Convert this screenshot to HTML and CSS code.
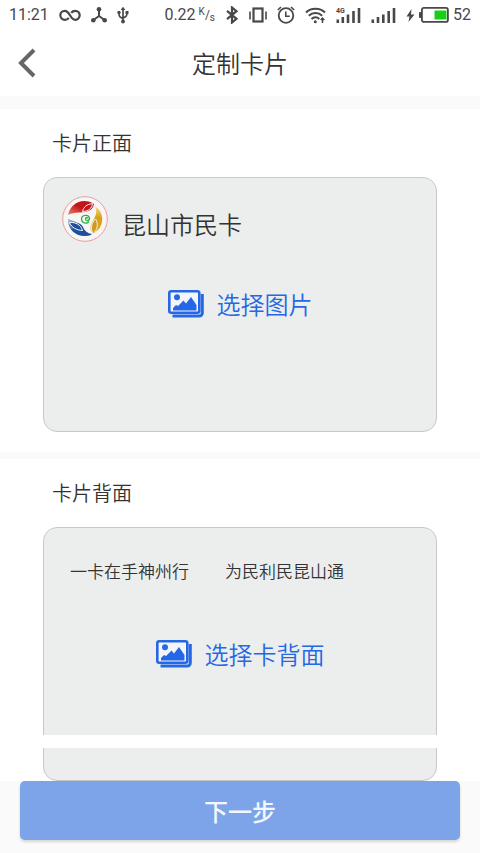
FILE: index.html
```html
<!DOCTYPE html>
<html lang="zh-CN">
<head>
    <meta charset="UTF-8">
    <meta name="viewport" content="width=device-width, initial-scale=1.0">
    <title>定制卡片</title>
    <link rel="stylesheet" href="styles.css">
</head>
<body>
    <!-- icono compartido: galería -->
    <svg class="defs" width="0" height="0" aria-hidden="true">
        <symbol id="icon-gallery" viewBox="0 0 36 28">
            <path d="M34.300 4v19a3 3 0 0 1-3 3H4.500" fill="none" stroke="#2468e6" stroke-width="3"/>
            <rect x="1.300" y="1.300" width="30" height="21.500" rx="2" fill="#f3f5fa" stroke="#2468e6" stroke-width="2.600"/>
            <circle cx="9" cy="7.300" r="3" fill="#2468e6"/>
            <path d="M5 20.500v-2.500l3-3 2 1 5.500-5.500 2.500 3 5-6.500 5.500 8v5.500z" fill="#2468e6"/>
        </symbol>
    </svg>

    <div class="status-bar">
        <div class="status-group">
            <span>11:21</span>
            <svg width="22" height="18" viewBox="0 0 22 18"><path d="M9.800 11.800C8.800 13.200 7.500 13.800 5.800 13.800a4.500 4.500 0 0 1 0-9C11 4.800 11 13.800 16.200 13.800a4.500 4.500 0 0 0 0-9c-1.700 0-3 .6-4 2" fill="none" stroke="#484848" stroke-width="2.200"/></svg>
            <svg width="16" height="18" viewBox="0 0 16 18"><path d="M8 3v7M8 10l-5.500 4M8 10l5.500 4" fill="none" stroke="#484848" stroke-width="2"/><g fill="#484848"><circle cx="8" cy="3.200" r="2.300"/><circle cx="2.300" cy="14.200" r="2.300"/><circle cx="13.700" cy="14.200" r="2.300"/></g></svg>
            <svg width="12" height="18" viewBox="0 0 12 18"><path d="M6 3v12M6 12.500C3.500 11.500 2 11 2 7.500M6 12c2.500-1 4-1.500 4-5" fill="none" stroke="#484848" stroke-width="1.700"/><path d="M3.600 4 6 .8 8.400 4z" fill="#484848"/><circle cx="6" cy="15.500" r="1.900" fill="#484848"/><circle cx="2" cy="6.500" r="1.700" fill="#484848"/><path d="M8.500 5h3v3h-3z" fill="#484848"/></svg>
        </div>
        <div class="status-group">
            <span class="speed">0.22 <span class="unit"><sup>K</sup>/<sub>s</sub></span></span>
            <svg width="14" height="18" viewBox="0 0 14 18"><path d="M2 4.800 11.500 12.800 7 16.500v-15l4.500 3.700L2 13.200" fill="none" stroke="#484848" stroke-width="2.200"/></svg>
            <svg width="18" height="18" viewBox="0 0 18 18"><path d="M1 5.500v8M17 5.500v8" stroke="#484848" stroke-width="1.600"/><rect x="4.500" y="2.500" width="9" height="13" fill="none" stroke="#484848" stroke-width="2.200"/></svg>
            <svg width="18" height="18" viewBox="0 0 18 18"><circle cx="9" cy="9.500" r="7.300" fill="none" stroke="#484848" stroke-width="1.800"/><path d="M8.800 5.500v4.700h4M.8 4 4 1M14 1l3.200 3" fill="none" stroke="#484848" stroke-width="1.600"/></svg>
            <svg width="21" height="18" viewBox="0 0 21 18"><path d="M1 6.500C6 1.500 15 1.500 20 6.500M3.800 9.800C7.500 6.200 13.500 6.200 17.200 9.800M6.500 13c2.400-2.400 5.500-2.400 7.800 0" fill="none" stroke="#484848" stroke-width="2"/><circle cx="10.300" cy="15.800" r="1.500" fill="#484848"/><path d="M17.500 17v-5M15.700 14l1.800-2 1.800 2" fill="none" stroke="#484848" stroke-width="1.500"/></svg>
            <svg width="25" height="18" viewBox="0 0 25 18"><text x="0" y="7" class="net-label">4G</text><path d="M1.800 17v-3.500M6.800 17v-6M12 17V8.500M17.500 17V5M23 17V2" stroke="#484848" stroke-width="2.600"/></svg>
            <svg width="25" height="18" viewBox="0 0 25 18"><path d="M1.800 17v-3.500M7 17v-6M12.300 17V8.500M17.700 17V5M23 17V2" stroke="#484848" stroke-width="2.600"/></svg>
            <div class="battery">
                <svg width="9" height="18" viewBox="0 0 9 18"><path d="M5.500 3 .5 10.500h3L2.500 16l6-7.500H5z" fill="#484848"/></svg>
                <svg width="30" height="18" viewBox="0 0 30 18"><rect x="2.900" y="1.900" width="26" height="14" rx="2" fill="none" stroke="#484848" stroke-width="1.800"/><rect x="0" y="6" width="3" height="6" rx="1" fill="#484848"/><rect x="15.500" y="4.500" width="12" height="9" fill="#17cf17"/></svg>
                <span>52</span>
            </div>
        </div>
    </div>

    <header class="header">
        <button class="back" type="button" aria-label="返回">
            <svg width="18" height="30" viewBox="0 0 18 30"><path d="M16 2 3 15l13 13" fill="none" stroke="#666" stroke-width="4"/></svg>
        </button>
        <h1>定制卡片</h1>
    </header>

    <main>
        <section class="section">
            <h2>卡片正面</h2>
            <div class="card card-front">
                <div class="card-brand">
                    <svg class="logo" width="46" height="46" viewBox="0 0 46 46" aria-hidden="true">
                        <defs>
                            <linearGradient id="red" x1="1" y1="0" x2="0" y2="1"><stop offset="0.5" stop-color="#c3161c"/><stop offset="1" stop-color="#ef8a70"/></linearGradient>
                            <linearGradient id="blue" x1="0" y1="0" x2="1" y2="1"><stop offset="0" stop-color="#b9d0ee"/><stop offset="0.45" stop-color="#1d4f9c"/></linearGradient>
                            <linearGradient id="gold" x1="0" y1="0" x2="0" y2="1"><stop offset="0" stop-color="#f3d980"/><stop offset="0.4" stop-color="#d8a21a"/></linearGradient>
                        </defs>
                        <circle cx="23" cy="23" r="22.300" fill="#f7f6f5" stroke="#ee9a9d" stroke-width="1"/>
                        <path d="M6 19C8 10 15 5 22 5c4 0 7.500 1 10 3-1 5-4 7-9 8-6 .8-11 0-17 3z" fill="url(#red)"/>
                        <path d="M20.500 15.500c1-4.500 4.500-7.500 10-7.800-.6 4.800-4 7.600-10 7.800z" fill="#c3161c" stroke="#f7f6f5" stroke-width="1"/>
                        <path d="M6 22.500c-1 10 7 18 18 17.500 2.500 0 5-.8 6-2-4.500-.5-7.500-3-9-7C19 26.500 12 26 6 22.500z" fill="url(#blue)"/>
                        <path d="M7.500 26.500c6.500-.5 11.500 2.500 13 8-6-.3-11-3-13-8z" fill="#1d4f9c" stroke="#f7f6f5" stroke-width="1"/>
                        <path d="M33 10.500c9.500 5 10.500 21-2 27-3-3-3-7-1-11 3-5.500 6-9 3-16z" fill="url(#gold)"/>
                        <path d="M33.500 23c3.200 4.500 2 11-2.300 14.500-3.200-4.500-1.700-11 2.300-14.500z" fill="#cf9a1c" stroke="#f7f6f5" stroke-width="1"/>
                        <path d="M27 25.500c-2.500 3-7.500 1.500-7.500-2.500 0-4.500 7.500-5 8-.7.200 2.700-4 3.200-4 .7 0-1.500 2-1.700 2.500-.5" fill="none" stroke="#35b04c" stroke-width="1.300"/>
                    </svg>
                    <span class="brand-name">昆山市民卡</span>
                </div>
                <button class="pick" type="button">
                    <svg width="36" height="28" aria-hidden="true"><use href="#icon-gallery"/></svg>
                    选择图片
                </button>
            </div>
        </section>

        <section class="section section-back">
            <h2>卡片背面</h2>
            <div class="card card-back">
                <div class="slogans">
                    <span>一卡在手神州行</span>
                    <span>为民利民昆山通</span>
                </div>
                <button class="pick" type="button">
                    <svg width="36" height="28" aria-hidden="true"><use href="#icon-gallery"/></svg>
                    选择卡背面
                </button>
                <div class="stripe"></div>
            </div>
        </section>
    </main>

    <footer class="footer">
        <button class="next" type="button">下一步</button>
    </footer>
</body>
</html>
```

FILE: styles.css
```css
* {
    box-sizing: border-box;
}
body {
    margin: 0;
    background: #fafafa;
    font-family: "Noto Sans CJK SC", sans-serif;
    font-weight: 350;
    color: #333;
}
button {
    padding: 0;
    border: 0;
    background: none;
    font-family: inherit;
    font-weight: inherit;
    cursor: pointer;
}
svg {
    display: block;
    flex: none;
}
.defs {
    position: absolute;
}

/* Barra de estado */
.status-bar {
    display: flex;
    justify-content: space-between;
    height: 30px;
    padding: 0 9px;
    background: #fff;
    font-family: Roboto, sans-serif;
    font-size: 16px;
    font-weight: 400;
    line-height: 30px;
    color: #484848;
    white-space: nowrap;
}
.status-group {
    display: flex;
    align-items: center;
    gap: 10px;
}
.speed {
    display: flex;
    gap: 3px;
}
.unit {
    font-size: 12px;
}
.unit sup, .unit sub {
    font-size: 10px;
    line-height: 0;
}
.unit sup {
    vertical-align: 4px;
}
.unit sub {
    vertical-align: -2px;
}
.net-label {
    font-size: 7px;
    font-weight: bold;
    fill: #484848;
}
.battery {
    display: flex;
    align-items: center;
    gap: 4px;
}

/* Cabecera */
.header {
    display: grid;
    grid-template-columns: 60px 1fr 60px;
    align-items: center;
    height: 66px;
    background: #fff;
}
.back {
    padding-left: 18px;
}
h1 {
    margin: 0;
    font-size: 24px;
    font-weight: inherit;
    line-height: 36px;
    text-align: center;
}

/* Secciones */
.section {
    margin-top: 13px;
    padding: 0 43px 20px;
    background: #fff;
}
.section-back {
    margin-top: 7px;
    padding-bottom: 0;
}
h2 {
    margin: 0;
    padding-left: 9px;
    font-size: 20px;
    font-weight: inherit;
    line-height: 68px;
}
.card {
    display: flex;
    flex-direction: column;
    border: 1px solid #c8c8c8;
    border-radius: 14px;
    background: #eceeed;
}
.card-front {
    gap: 44px;
    padding: 18px 0 109px;
}
.card-brand {
    display: flex;
    align-items: flex-end;
    gap: 14px;
    padding-left: 18px;
}
.brand-name {
    font-size: 24px;
    line-height: 36px;
}
.pick {
    display: flex;
    align-items: center;
    align-self: center;
    gap: 13px;
    font-size: 24px;
    line-height: 36px;
    color: #2468e6;
}
.card-back {
    padding: 31px 0 32px;
}
.slogans {
    display: flex;
    gap: 36px;
    padding-left: 26px;
    margin-bottom: 53px;
    font-size: 17px;
    line-height: 24px;
}
/* la banda tapa también el borde de la tarjeta */
.stripe {
    height: 13px;
    margin: 63px -1px 0;
    background: #fff;
}

.footer {
    padding: 0 20px 13px;
}
.next {
    width: 100%;
    height: 59px;
    border-radius: 5px;
    background: #7da4e8;
    box-shadow: 0 2px 3px rgba(0, 0, 0, 0.15);
    color: #f4f7fd;
    font-size: 24px;
    font-weight: 500;
}
```
